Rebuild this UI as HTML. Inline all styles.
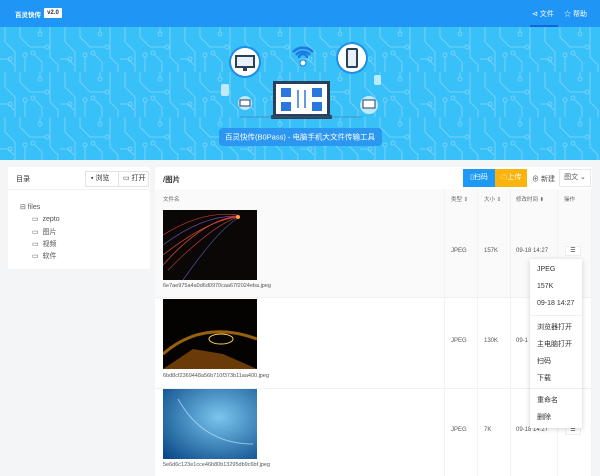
<!DOCTYPE html>
<html><head><meta charset="utf-8"><style>
*{box-sizing:border-box;margin:0;padding:0}
body{width:600px;height:476px;overflow:hidden;background:#f4f5f7;font-family:"Liberation Sans","Noto Sans CJK SC",sans-serif;font-size:7px;color:#333;position:relative}
.hdr{position:absolute;left:0;top:0;width:600px;height:27px;background:#1f96f6}
.abs{position:absolute}
.panel{position:absolute;background:#fff}
.th{position:absolute;top:195px;font-size:5.5px;color:#666}
.cell{position:absolute;font-size:6px;color:#555}
.mi{position:absolute;left:537px;font-size:7px;color:#333}
</style></head><body>
<div class="hdr"></div>
<div class="abs" style="left:15px;top:9px;color:#fff;font-size:6.5px;font-weight:bold">百灵快传</div>
<div class="abs" style="left:44px;top:8px;width:18px;height:10px;background:#fff;color:#333;font-size:6px;font-weight:bold;text-align:center;line-height:10px;border-radius:1px">v2.0</div>
<div class="abs" style="left:532px;top:9px;color:#fff;font-size:7px">⊲ 文件</div>
<div class="abs" style="left:530px;top:25px;width:28px;height:2px;background:#1565d8"></div>
<div class="abs" style="left:564px;top:9px;color:#fff;font-size:7px">☆ 帮助</div>
<svg class="abs" style="left:0;top:27px" width="600" height="133">
<defs><pattern id="c" width="60" height="45" patternUnits="userSpaceOnUse">
<g stroke="#86d6fa" stroke-width="0.8" fill="none">
<path d="M5 0V15L15 25V45M20 0V10L30 20H45M40 0V5M50 0V30L58 38V45M0 32H8L14 38M25 30V45M35 28L42 35V45"/>
<circle cx="40" cy="7" r="2"/><circle cx="47" cy="20" r="2"/><circle cx="10" cy="32" r="2"/><circle cx="25" cy="28" r="2"/><circle cx="33" cy="26" r="2"/>
</g></pattern></defs>
<rect width="600" height="133" fill="#38c0f8"/>
<rect width="600" height="133" fill="url(#c)"/>
<g>
<circle cx="245" cy="35" r="16" fill="#1e8fe8"/><circle cx="245" cy="35" r="14" fill="#fff"/>
<rect x="235" y="28" width="20" height="13" fill="#2a3f5a"/><rect x="237" y="30" width="16" height="9" fill="#e8f0fa"/>
<rect x="243" y="41" width="4" height="3" fill="#2a3f5a"/>
<circle cx="352" cy="31" r="16" fill="#1e8fe8"/><circle cx="352" cy="31" r="14" fill="#fff"/>
<rect x="346" y="21" width="12" height="20" rx="2" fill="#2a3f5a"/><rect x="348" y="23" width="8" height="16" fill="#e8f0fa"/>
<path d="M293 25a14 14 0 0 1 20 0M296 28a9 9 0 0 1 14 0M299 31a4 4 0 0 1 8 0" stroke="#1e7ae0" stroke-width="2.5" fill="none"/>
<circle cx="303" cy="36" r="3" fill="#fff" stroke="#1e7ae0"/>
<rect x="273" y="54" width="57" height="35" fill="#2a3f5a"/><rect x="276" y="57" width="51" height="30" fill="#fff"/>
<rect x="271" y="88" width="61" height="4" rx="1" fill="#2a3f5a"/>
<rect x="281" y="61" width="10" height="9" fill="#2a78de"/><rect x="281" y="75" width="10" height="9" fill="#2a78de"/>
<rect x="312" y="61" width="10" height="9" fill="#2a78de"/><rect x="312" y="75" width="10" height="9" fill="#2a78de"/>
<path d="M298 63V81M305 63V81" stroke="#2a78de" stroke-width="1.5"/>
<line x1="240" y1="90" x2="362" y2="90" stroke="#4a6a8a" stroke-width="0.5"/>
<circle cx="369" cy="78" r="9" fill="#bfeafd"/><rect x="363" y="73" width="12" height="8" fill="#fff" stroke="#2a3f5a"/>
<circle cx="245" cy="76" r="7" fill="#bfeafd"/><rect x="240" y="73" width="10" height="6" fill="#fff" stroke="#2a3f5a"/>
<rect x="221" y="57" width="8" height="12" rx="2" fill="#bfeafd"/>
<rect x="374" y="48" width="7" height="10" rx="2" fill="#bfeafd"/>
</g>
<rect x="219" y="101" width="163" height="18" rx="4" fill="#2b97f0"/>
<text x="300" y="112.5" fill="#fff" font-size="7.5" text-anchor="middle" font-family="Liberation Sans,Noto Sans CJK SC,sans-serif">百灵快传(B0Pass) - 电脑手机大文件传输工具</text>
</svg>
<!-- left panel -->
<div class="panel" style="left:8px;top:167px;width:142px;height:102px"></div>
<div class="abs" style="left:16px;top:174px;font-size:7px">目录</div>
<div class="abs" style="left:85px;top:171px;width:64px;height:16px;border:1px solid #e3e3e3;font-size:7px;line-height:14px"><span style="padding-left:5px">▪ 浏览</span><span style="position:absolute;left:32px;top:0;height:14px;border-left:1px solid #e3e3e3;padding-left:4px">▭ 打开</span></div>
<div class="abs" style="left:8px;top:189px;width:142px;height:1px;background:#f0f0f0"></div>
<div class="abs" style="left:20px;top:202px;font-size:7px;color:#555;line-height:12.3px">⊟ files<br>
<span style="padding-left:12px">▭ &nbsp;zepto</span><br><span style="padding-left:12px">▭ &nbsp;图片</span><br><span style="padding-left:12px">▭ &nbsp;视频</span><br><span style="padding-left:12px">▭ &nbsp;软件</span></div>
<!-- right panel -->
<div class="panel" style="left:155px;top:167px;width:437px;height:309px"></div>
<div class="abs" style="left:163px;top:174px;font-size:7.5px;font-weight:bold">/图片</div>
<div class="abs" style="left:463px;top:169px;width:32px;height:18px;background:#1c9af5;color:#fff;font-size:7px;line-height:18px;text-align:center">▯扫码</div>
<div class="abs" style="left:495px;top:169px;width:32px;height:18px;background:#fbb40d;color:#fff;font-size:7px;line-height:18px;text-align:center">☁上传</div>
<div class="abs" style="left:532px;top:174px;font-size:7px;color:#555">⊕ 新建</div>
<div class="abs" style="left:559px;top:169px;width:32px;height:18px;border:1px solid #e8e8e8;font-size:7px;line-height:16px;text-align:center;color:#555">图文 ⌄</div>
<div class="abs" style="left:155px;top:189px;width:437px;height:17px;background:#fafafa"></div>
<div class="th" style="left:163px">文件名</div>
<div class="th" style="left:451px">类型 ⇕</div>
<div class="th" style="left:484px">大小 ⇕</div>
<div class="th" style="left:516px">修改时间 ⬍</div>
<div class="th" style="left:564px">操作</div>
<div class="abs" style="left:155px;top:206px;width:437px;height:91px;background:#fafafa"></div>
<div class="abs" style="left:155px;top:297px;width:437px;height:1px;background:#f0f0f0"></div>
<div class="abs" style="left:155px;top:388px;width:437px;height:1px;background:#f0f0f0"></div>
<div class="abs" style="left:444px;top:189px;width:1px;height:287px;background:#f2f2f2"></div>
<div class="abs" style="left:477px;top:189px;width:1px;height:287px;background:#f2f2f2"></div>
<div class="abs" style="left:510px;top:189px;width:1px;height:287px;background:#f2f2f2"></div>
<div class="abs" style="left:557px;top:189px;width:1px;height:287px;background:#f2f2f2"></div>
<div class="abs" style="left:591px;top:189px;width:1px;height:287px;background:#f2f2f2"></div>
<svg class="abs" style="left:163px;top:210px" width="94" height="70"><rect width="94" height="70" fill="#0b0707"/>
<g fill="none" stroke-width="0.7"><path d="M0 25Q40 0 75 5" stroke="#c43a2a"/><path d="M0 35Q40 5 75 6" stroke="#6a4aa0"/><path d="M0 45Q45 10 75 7" stroke="#d04a30"/><path d="M5 60Q50 15 75 7" stroke="#a53a3a"/><path d="M20 70Q55 20 75 8" stroke="#4a5aa0"/><path d="M0 55Q40 10 75 6" stroke="#e0503a"/></g><circle cx="75" cy="7" r="2" fill="#ffa040"/></svg>
<div class="abs" style="left:163px;top:283px;font-size:5.5px;color:#555">6e7ae975a4a0d6d0970caa67f2024eba.jpeg</div>
<svg class="abs" style="left:163px;top:299px" width="94" height="70"><rect width="94" height="70" fill="#050302"/>
<path d="M0 55Q40 20 94 40" stroke="#d88a10" stroke-width="3" fill="none" opacity=".7"/><ellipse cx="58" cy="40" rx="12" ry="5" fill="none" stroke="#ffd050"/><path d="M0 70L30 50L60 55L94 70Z" fill="#6a3a08"/></svg>
<div class="abs" style="left:163px;top:373px;font-size:5.5px;color:#555">6bd8cf2369448a56b710f373b11aa400.jpeg</div>
<svg class="abs" style="left:163px;top:389px" width="94" height="70"><defs><radialGradient id="g" cx=".6" cy=".4" r=".8"><stop offset="0" stop-color="#7ac6ee"/><stop offset="1" stop-color="#0a4a8a"/></radialGradient></defs><rect width="94" height="70" fill="url(#g)"/><path d="M15 10Q40 55 90 55" stroke="#cfefff" stroke-width="1" fill="none" opacity=".6"/></svg>
<div class="abs" style="left:163px;top:462px;font-size:5.5px;color:#555">5e6d6c123e1cce46b80b13295db9c6bf.jpeg</div>
<div class="cell" style="left:451px;top:248px">JPEG</div><div class="cell" style="left:484px;top:248px">157K</div><div class="cell" style="left:516px;top:248px">09-18 14:27</div>
<div class="abs" style="left:565px;top:246px;width:16px;height:10px;border:1px solid #eee;background:#fff;font-size:6px;text-align:center;line-height:8px">☰</div>
<div class="cell" style="left:451px;top:338px">JPEG</div><div class="cell" style="left:484px;top:338px">130K</div><div class="cell" style="left:516px;top:338px">09-1</div>
<div class="cell" style="left:451px;top:427px">JPEG</div><div class="cell" style="left:484px;top:427px">7K</div><div class="cell" style="left:516px;top:427px">09-18 14:27</div>
<div class="abs" style="left:565px;top:425px;width:16px;height:10px;border:1px solid #eee;background:#fff;font-size:6px;text-align:center;line-height:8px">☰</div>
<div class="abs" style="left:530px;top:259px;width:52px;height:169px;background:#fff;box-shadow:0 1px 5px rgba(0,0,0,.18)"></div>
<div class="mi" style="top:266px">JPEG</div>
<div class="mi" style="top:283px">157K</div>
<div class="mi" style="top:300px">09-18 14:27</div>
<div class="abs" style="left:530px;top:315px;width:52px;height:1px;background:#eee"></div>
<div class="mi" style="top:322px">浏览器打开</div>
<div class="mi" style="top:339px">主电脑打开</div>
<div class="mi" style="top:356px">扫码</div>
<div class="mi" style="top:373px">下载</div>
<div class="abs" style="left:530px;top:388px;width:52px;height:1px;background:#eee"></div>
<div class="mi" style="top:395px">重命名</div>
<div class="mi" style="top:412px">删除</div>
</body></html>
